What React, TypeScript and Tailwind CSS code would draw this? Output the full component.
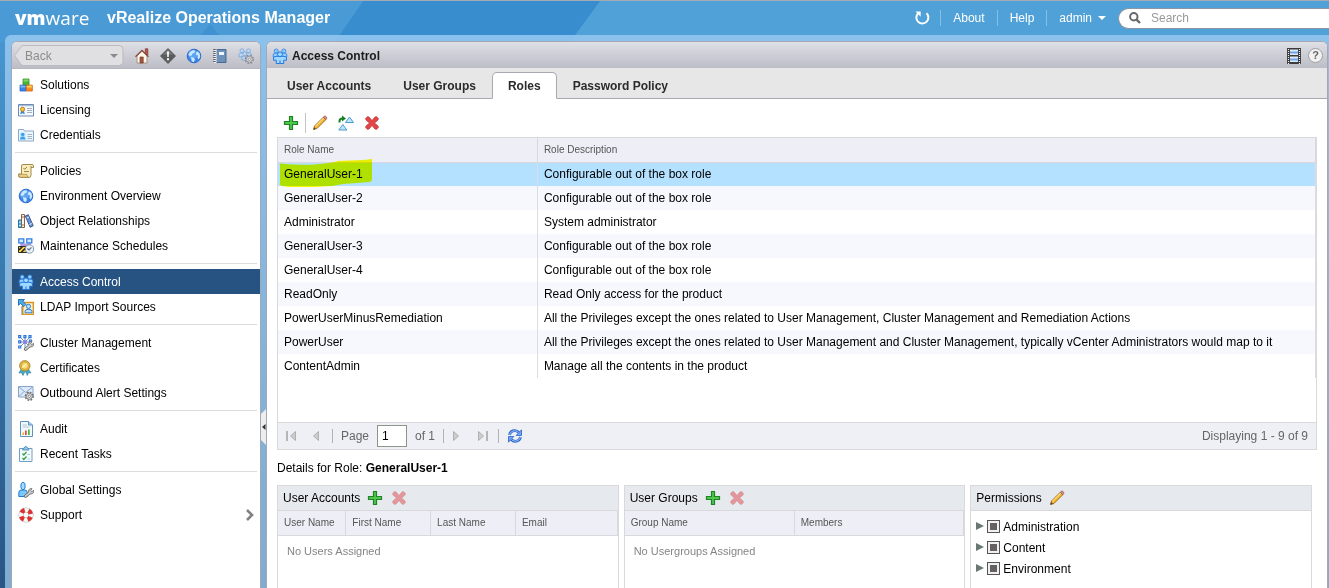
import React from "react";

type IconName = keyof typeof icons;

const person = (x: number, y: number, fill: string, stroke: string) => (
  <g fill={fill} stroke={stroke} strokeWidth=".8">
    <circle cx={x} cy={y} r="2" />
    <path d={`M${x - 3} ${y + 6}V${y + 4}q0-1.800 1.800-1.800h2.400q1.800 0 1.800 1.800v2z`} />
  </g>
);

const people = (
  <>
    {person(4.2, 3, "#8fd0ff", "#2f7fe0")}
    {person(11.8, 3, "#8fd0ff", "#2f7fe0")}
    <g fill="#9fd9ff" stroke="#1d6fe0" strokeWidth=".9">
      <path d="M1.500 9.500 4 8.300h8l2.500 1.200v2.700h-2.800v3.300H4.300v-3.300H1.500z" />
      <circle cx="8" cy="6.300" r="2.400" />
    </g>
    <path d="M8 12.500v2.500" stroke="#1d6fe0" />
  </>
);

const gear = (
  <g>
    <circle cx="11.300" cy="11.300" r="3.900" stroke="#6e6e6e" strokeDasharray="1.700 1.360" strokeWidth="1.500" />
    <circle cx="11.300" cy="11.300" r="3" fill="#e3e3e3" stroke="#7b7b7b" strokeWidth=".9" />
    <circle cx="11.300" cy="11.300" r="1.200" fill="#fff" stroke="#666" strokeWidth=".7" />
  </g>
);

const wrench = (
  <>
    <path d="M7.500 14.300 11.800 10.600" stroke="#6b6b6b" strokeWidth="3.200" strokeLinecap="round" />
    <path d="M11 7.500q1.700-1.500 3-.9l-1.300 1.900 1.100 1 1.900-1.100q.5 2.600-1.500 3.400-2.300.7-3.300-1-.9-1.600.1-3.300z" fill="#c4c4c4" stroke="#6b6b6b" strokeWidth=".8" />
    <path d="M7.600 14.200 12 10.400" stroke="#cfcfcf" strokeWidth="1.700" strokeLinecap="round" />
  </>
);

const icons = {
  home: (
    <>
      <path d="M11.300.8h2.500v6h-2.500z" fill="#b5544a" stroke="#84332a" strokeWidth=".7" />
      <path d="M3 7.800 8 3.200l5 4.600v7.200H3z" fill="#fdf6ea" stroke="#a08a78" strokeWidth=".9" />
      <path d="M1.500 8.800 8 2.400l6.500 6.400" stroke="#8b4a3f" strokeWidth="1.300" />
      <path d="M6 9h3.200v6H6z" fill="#a5583e" stroke="#7a3a28" strokeWidth=".7" />
    </>
  ),
  alert: (
    <>
      <path d="m8 .5 7.500 7.500L8 15.500.5 8z" fill="#5c5c5c" stroke="#474747" strokeWidth=".7" />
      <path d="m8 1.500 5 5H3z" fill="#7b7b7b" />
      <path d="M7 3.500h2l-.3 5.500H7.300zM7 10.200h2v2H7z" fill="#fff" />
    </>
  ),
  globe: (
    <>
      <circle cx="8" cy="8" r="6.800" fill="#3d84ea" stroke="#2c6bce" />
      <circle cx="6.800" cy="6.500" r="4.600" fill="#5fa3f5" />
      <path d="M2.300 6.800 4.500 3.500l3-1.500 1.600.8-.6 2-2 .7-.8 1.900L3.800 8zM5 9l3 .8 1 2-1.400 2.500-2-1.200zM11 3.200l2.400 1.900.9 3.400-1.500 3-1.500-1.800.7-1.900-2.200-1.300.5-2.100z" fill="#c9e9ff" />
    </>
  ),
  notebook: (
    <>
      <path d="M3 1.500h11v13H3z" fill="#6d91ba" stroke="#476a93" />
      <path d="M2 1h2.500v14H2z" fill="#f4f4f4" />
      <path d="M2.500 1v14" stroke="#555" strokeWidth="2.400" strokeDasharray="1 1" />
      <path d="M7 4h5v3H7z" fill="#f2f7fc" />
    </>
  ),
  peopleGear: (
    <g opacity=".7">
      {person(4, 2.800, "#b5dbfa", "#5a93dc")}
      {person(10.500, 2.800, "#b5dbfa", "#5a93dc")}
      {person(6.800, 6, "#b5dbfa", "#5a93dc")}
      {gear}
    </g>
  ),
  people,
  blocks: (
    <>
      <path d="M5 2h6v6.500H5z" fill="#4bb434" stroke="#368a26" strokeWidth=".8" />
      <path d="M5.500 2.500h5v2h-5z" fill="#83d563" />
      <path d="M2 8.200h6V14H2z" fill="#3c83e8" stroke="#2a63b9" strokeWidth=".8" />
      <path d="M2.500 8.700h5v1.800h-5z" fill="#84b7fa" />
      <path d="M8.300 8.200h6V14h-6z" fill="#fa8e1d" stroke="#cf5c18" strokeWidth=".8" />
      <path d="M8.800 8.700h5v1.800h-5z" fill="#ffd44e" />
    </>
  ),
  license: (
    <>
      <path d="M.5 2.500h15v11.500H.5z" fill="#f6f9fd" stroke="#6e8bb3" />
      <path d="M1 3h14v1.300H1z" fill="#a9bfdb" />
      <path d="m3 9-.8 3.300 2.300-1 2.300 1L6 9z" fill="#3d85cc" />
      <circle cx="4.600" cy="7.300" r="2.100" fill="#f7c23e" stroke="#b5801c" strokeWidth=".9" />
      <path d="M9 6.500h5M9 8.500h5M9 10.500h5" stroke="#a7aebd" />
    </>
  ),
  credential: (
    <>
      <path d="M.5 2.500h5l1 1.500h9V14H.5z" fill="#edf5fd" stroke="#8aa7c9" />
      <path d="M2 5.500h5.500v7H2z" fill="#c1e5ff" />
      <circle cx="4.700" cy="7.500" r="1.700" fill="#38a1ee" />
      <path d="M2 12.500q.2-3 2.700-3t2.800 3z" fill="#38a1ee" />
      <path d="M9.500 7.500H14M9.500 9.500H14M9.500 11.500H14" stroke="#9fb4ce" />
    </>
  ),
  policy: (
    <>
      <path d="M5 1.500h9q1.500 0 1.500 1.500v1.500h-2.500V12q0 2.500-2 2.500H2.500q-2 0-2-2V11h3V3q0-1.500 1.500-1.500z" fill="#f9ebba" stroke="#a38b4c" />
      <path d="M.8 11.300h8q0 2.700 2 3H2.500q-1.700-.2-1.700-2z" fill="#ebcf82" stroke="#a38b4c" strokeWidth=".7" />
      <path d="m5.500 5 1.200 1.300L9 4M6 8.500h5M13 4.500V3" stroke="#96824b" />
    </>
  ),
  books: (
    <>
      <path d="M.5 7h3v7.500h-3z" fill="#4db1e2" stroke="#23759f" />
      <path d="M1 9h2M1 12.500h2" stroke="#d3f0ff" />
      <path d="M3.500 1.500h3v13h-3z" fill="#f8f2ea" stroke="#85604a" />
      <path d="M4 4h2M4 12h2" stroke="#b36b49" />
      <path d="m7.300 3 3-1.300 4.900 11-3 1.600z" fill="#6893d7" stroke="#36568f" />
      <path d="m8.800 5 2-.9M11.500 11.500l2.200-1" stroke="#eff5ff" />
    </>
  ),
  maintenance: (
    <>
      <path d="M3.500 5v3M11.500 5v3M3 6.800h9" stroke="#b39ae5" strokeWidth="2.500" />
      <path d="M.8.800h5v4h-5zM8.800.800h5v4h-5z" fill="#d6ecff" stroke="#2f80e4" strokeWidth="1.300" />
      <path d="M.5 8.500h8.500v6H.5z" fill="#ffd93b" stroke="#2b2b2b" />
      <path d="m1 12 3.300-3.300M3.500 14 9 8.800" stroke="#2b2b2b" strokeWidth="1.700" />
      <circle cx="11.500" cy="11" r="4.100" fill="#edf4fb" stroke="#8297b1" />
      <path d="m9.300 10.500 1.800 1.500 2.300-2.600" stroke="#5d7390" strokeWidth="1.200" />
    </>
  ),
  ldap: (
    <>
      <path d="M4.800 3.500h10.500v12H4.800z" fill="#fff1c9" stroke="#dc9524" strokeWidth="1.400" />
      <circle cx="10.500" cy="7.400" r="2.100" fill="#bfe3ff" stroke="#2f80d0" />
      <path d="M7 13.800v-1.500q0-2 3.500-2t3.500 2v1.500z" fill="#bfe3ff" stroke="#2f80d0" />
      <path d="M3.800 7.500V16" stroke="#555" strokeWidth="1.200" strokeDasharray="1 1" />
      <path d="M.5.500h6L4.800 2.200 8 5.400 5.800 7.600 2.500 4.400.5 6.300z" fill="#4aacec" stroke="#1c68a8" strokeWidth=".9" />
    </>
  ),
  cluster: (
    <>
      <path d="m2.500 2.500 9 9M11.500 2.500l-9 9M7 1v12M1 7h12" stroke="#6484b5" strokeWidth=".9" />
      <path d="M.7.700h2v2h-2zM5.900.700h2v2h-2zM11 .7h2v2h-2zM.7 5.900h2v2h-2zM.7 11h2v2h-2zM11.500 5h2v2h-2z" fill="#fff" stroke="#2c74db" strokeWidth="1.200" />
      <circle cx="7" cy="7" r="1.900" fill="#8b7ae8" />
      {wrench}
    </>
  ),
  certificate: (
    <>
      <path d="M3.500 8.500 1 13l2.500-.2L5 15.500l2.500-5zM10 8.500l3 4.500-2.500-.2L9.300 15.500 6.800 10z" fill="#42a9cf" stroke="#2d7c9d" strokeWidth=".6" />
      <circle cx="6.800" cy="5.800" r="5.200" fill="#e9bd41" stroke="#a68529" strokeWidth=".9" />
      <circle cx="6.800" cy="5.800" r="3.500" fill="#f7dc79" stroke="#cda134" strokeWidth=".8" />
      <path d="m4.500 7.800 4.300-4" stroke="#fff1b5" strokeWidth="1.300" />
    </>
  ),
  mailGear: (
    <>
      <path d="M.5 1.500h14.500v10.500H.5z" fill="#dbe9f9" stroke="#89a3c7" />
      <path d="m1 2 6.700 5.500L14.500 2M1 11.500l5-5M14.500 11.500l-5-5" stroke="#89a3c7" />
      {gear}
    </>
  ),
  audit: (
    <>
      <path d="M2.500.5h8L14.500 4v11.500h-12z" fill="#f1f9ff" stroke="#6092bf" />
      <path d="M10.500.5V4h4" fill="#a7cdec" stroke="#6092bf" />
      <path d="M4.500 4H9M4.500 6h7" stroke="#b7c7d4" />
      <path d="M4.500 11.500h1.500V14H4.500z" fill="#f0a92b" />
      <path d="M7 9.500h1.700V14H7z" fill="#e44a3b" />
      <path d="M10 8.500h1.700V14H10z" fill="#46b53f" />
    </>
  ),
  tasks: (
    <>
      <path d="M1.500 2.500H14v13H1.500z" fill="#f4fbff" stroke="#6f9fc2" />
      <path d="M4.500 4q0-2 1.800-2Q6.500.500 7.800.500T9.300 2Q11 2 11 4z" fill="#92c7ec" stroke="#4d8dbc" strokeWidth=".9" />
      <path d="m4.500 7.500 1.300 1.500L8.500 6M4.500 12l1.300 1.500 2.700-3" stroke="#2fa03f" strokeWidth="1.300" />
      <path d="M9.500 8.500h2.500M9.500 13h2.500" stroke="#b1cad9" />
    </>
  ),
  userWrench: (
    <>
      <path d="M.8 14.500V10.800q0-2.800 2.500-2.800h3.500q2.500 0 2.500 2.800v3.700z" fill="#7cc8fb" stroke="#237cc9" />
      <path d="M3 2 4 .6h2L7 2v4L6 7.500H4L3 6z" fill="#a8dcff" stroke="#237cc9" />
      {wrench}
    </>
  ),
  lifebuoy: (
    <>
      <circle cx="8" cy="8" r="5" stroke="#b4b4b4" strokeWidth="5.200" />
      <circle cx="8" cy="8" r="5" stroke="#f7f7f7" strokeWidth="4.200" />
      <circle cx="8" cy="8" r="5" stroke="#dc3330" strokeWidth="4.400" strokeDasharray="3.927 3.927" strokeDashoffset="-1.963" />
    </>
  ),
  plus: <path d="M6.500 1.500h3v5h5v3h-5v5h-3v-5h-5v-3h5z" fill="#4ac94a" stroke="#238127" strokeWidth="1.200" />,
  pencil: (
    <>
      <path d="m1.500 14.500 1-3.500L11.300 2.200l2.500 2.500L5 13.500z" fill="#f6b32d" stroke="#85591e" strokeWidth=".8" />
      <path d="M3.500 11.300 11.700 3.100" stroke="#ffe184" strokeWidth="1.100" />
      <path d="m11.300 2.200 1-1q.9-.5 1.800.4t.6 2l-.9 1.100z" fill="#e58b87" stroke="#875151" strokeWidth=".7" />
      <path d="m1.500 14.500.6-2.200 1.700 1.700z" fill="#493a2e" />
    </>
  ),
  clone: (
    <>
      <path d="m11.500 2 4 5.500h-8zM4.800 9.500l4 5.500h-8z" fill="#bfe4fb" stroke="#3a93cf" strokeWidth=".9" />
      <path d="M1.500 7.500V6q0-2.500 3-2.500" stroke="#198124" strokeWidth="2" />
      <path d="m4 .6 4 3-4 3z" fill="#198124" />
    </>
  ),
  cross: (
    <path d="M1.600 3.500 3.500 1.600 5 2l3 3.500L11 2l1.500-.4 1.900 1.900L14 5l-3.500 3L14 11l.4 1.500-1.900 1.900L11 14l-3-3.500L5 14l-1.500.4-1.900-1.900L2 11l3.500-3L2 5z" fill="#e44648" stroke="#b93537" strokeWidth=".7" />
  ),
  film: (
    <>
      <path d="M1 0h14v16H1z" fill="#3b3b3b" />
      <path d="M2.500 1v15M13.500 1v15" stroke="#f1f1f1" strokeWidth="1.200" strokeDasharray="1 1" />
      <path d="M4 1.500h8V7H4zM4 8.500h8V14H4z" fill="#dcebfc" />
      <path d="M4 3.500h8v2H4zM4 10.500h8v2H4z" fill="#75a3e8" />
    </>
  ),
  first: (
    <>
      <path d="M3 3v10" stroke="#b5b5b5" strokeWidth="2" />
      <path d="M11.500 3.500v9L6.500 8z" fill="#ccc" stroke="#b0b0b0" />
    </>
  ),
  prev: <path d="M10.500 3.500v9L5.500 8z" fill="#ccc" stroke="#b0b0b0" />,
  next: <path d="M5.500 3.500v9l5-4.500z" fill="#ccc" stroke="#b0b0b0" />,
  last: (
    <>
      <path d="M13 3v10" stroke="#b5b5b5" strokeWidth="2" />
      <path d="M4.500 3.500v9l5-4.500z" fill="#ccc" stroke="#b0b0b0" />
    </>
  ),
  refresh: (
    <>
      <path d="M2.500 7q1-4.300 5.300-4.300 2.400 0 4 2" stroke="#2a63c8" strokeWidth="2.800" />
      <path d="M14.500 1.800v5.700H9.200z" fill="#6ea6f3" stroke="#2a63c8" strokeWidth=".8" />
      <path d="M13.500 9q-1 4.300-5.300 4.300-2.400 0-4-2" stroke="#2a63c8" strokeWidth="2.800" />
      <path d="M1.500 14.200V8.500h5.300z" fill="#6ea6f3" stroke="#2a63c8" strokeWidth=".8" />
      <path d="M2.600 7q1-4.200 5.200-4.200 2.300 0 3.700 1.700M13.400 9q-1 4.200-5.200 4.200-2.300 0-3.700-1.700" stroke="#a3cbff" />
    </>
  ),
};

function Icon({ name, className = "" }: { name: IconName; className?: string }) {
  return (
    <svg viewBox="0 0 16 16" fill="none" aria-hidden="true" className={`size-4 shrink-0 ${className}`}>
      {icons[name]}
    </svg>
  );
}

function IconButton({ name, label, disabled }: { name: IconName; label: string; disabled?: boolean }) {
  return (
    <button type="button" aria-label={label} disabled={disabled} className="shrink-0">
      <Icon name={name} className={disabled ? "opacity-50" : ""} />
    </button>
  );
}

const navGroups: { label: string; icon: IconName }[][] = [
  [
    { label: "Solutions", icon: "blocks" },
    { label: "Licensing", icon: "license" },
    { label: "Credentials", icon: "credential" },
  ],
  [
    { label: "Policies", icon: "policy" },
    { label: "Environment Overview", icon: "globe" },
    { label: "Object Relationships", icon: "books" },
    { label: "Maintenance Schedules", icon: "maintenance" },
  ],
  [
    { label: "Access Control", icon: "people" },
    { label: "LDAP Import Sources", icon: "ldap" },
  ],
  [
    { label: "Cluster Management", icon: "cluster" },
    { label: "Certificates", icon: "certificate" },
    { label: "Outbound Alert Settings", icon: "mailGear" },
  ],
  [
    { label: "Audit", icon: "audit" },
    { label: "Recent Tasks", icon: "tasks" },
  ],
  [
    { label: "Global Settings", icon: "userWrench" },
    { label: "Support", icon: "lifebuoy" },
  ],
];

const roles = [
  { name: "GeneralUser-1", description: "Configurable out of the box role" },
  { name: "GeneralUser-2", description: "Configurable out of the box role" },
  { name: "Administrator", description: "System administrator" },
  { name: "GeneralUser-3", description: "Configurable out of the box role" },
  { name: "GeneralUser-4", description: "Configurable out of the box role" },
  { name: "ReadOnly", description: "Read Only access for the product" },
  {
    name: "PowerUserMinusRemediation",
    description:
      "All the Privileges except the ones related to User Management, Cluster Management and Remediation Actions",
  },
  {
    name: "PowerUser",
    description:
      "All the Privileges except the ones related to User Management and Cluster Management, typically vCenter Administrators would map to it",
  },
  { name: "ContentAdmin", description: "Manage all the contents in the product" },
];

const tabs = ["User Accounts", "User Groups", "Roles", "Password Policy"];

function Header() {
  return (
    <header className="flex h-[35px] shrink-0 items-center border-t border-[#a5abb2] pl-[15px] text-white">
      <a href="#" className="flex w-[92px] items-center font-['Open_Sans',sans-serif] text-[19px] leading-8">
        <span className="font-extrabold">vm</span>
        <span>ware</span>
      </a>
      <h1 className="text-base font-bold">vRealize Operations Manager</h1>
      <nav className="ml-auto flex items-center text-xs">
        <button type="button" aria-label="Refresh" className="mr-2.5">
          <svg viewBox="0 0 16 16" fill="none" className="size-4">
            <path d="M12.500 3.200A6 6 0 1 1 4 3.400" stroke="#fff" strokeWidth="2" />
            <path d="M1.500 1.500h5.200v5.200z" fill="#fff" />
          </svg>
        </button>
        <a href="#" className="border-l border-[#86bfe6] px-3">About</a>
        <a href="#" className="border-l border-[#86bfe6] px-3">Help</a>
        <button type="button" className="flex items-center gap-1.5 border-l border-[#86bfe6] px-3">
          admin
          <svg viewBox="0 0 8 4" className="h-1 w-2"><path d="M0 0h8L4 4z" fill="#fff" /></svg>
        </button>
      </nav>
      <label className="flex h-[21px] w-[211px] items-center gap-2.5 rounded-l-full border border-r-0 border-[#8a96a3] bg-white pl-2.5">
        <svg viewBox="0 0 12 12" fill="none" className="size-3 shrink-0" aria-hidden="true">
          <circle cx="4.800" cy="4.800" r="3.700" stroke="#686868" strokeWidth="2" />
          <path d="m7.600 7.600 3.400 3.400" stroke="#686868" strokeWidth="2.400" />
        </svg>
        <input type="text" aria-label="Search" placeholder="Search" className="w-full min-w-0 text-xs text-black outline-none placeholder:text-[#9a9a9a]" />
      </label>
    </header>
  );
}

function Sidebar() {
  return (
    <aside className="flex w-[250px] shrink-0 flex-col overflow-hidden rounded-t-md border border-b-0 border-[#a3a8b4] bg-white">
      <div className="flex h-[27px] shrink-0 items-center gap-2.5 border-b border-[#b5b6be] bg-linear-to-b from-[#dfdfe6] to-[#bcbdc6] pt-px pl-0.5">
        <button type="button" className="relative flex h-[21px] w-[110px] items-center justify-between pr-1.5 pl-[11px] text-xs text-[#8b8b8b]">
          <svg viewBox="0 0 110 21" fill="none" className="absolute inset-0 size-full" aria-hidden="true">
            <path d="M9 .5h96q4 0 4 4v12q0 4-4 4H9q-1.500 0-2.500-2L.7 10.500 6.500 2.500q1-2 2.500-2z" fill="#e0e0e2" stroke="#bababf" />
          </svg>
          <span className="relative">Back</span>
          <svg viewBox="0 0 8 4" className="relative h-1 w-2"><path d="M0 0h8L4 4z" fill="#8b8b8b" /></svg>
        </button>
        <IconButton name="home" label="Home" />
        <IconButton name="alert" label="Alerts" />
        <IconButton name="globe" label="Environment" />
        <IconButton name="notebook" label="Content" />
        <IconButton name="peopleGear" label="Administration" />
      </div>
      <nav className="pt-[3px] text-xs">
        {navGroups.map((group, index) => (
          <React.Fragment key={index}>
            {index > 0 && <hr className="mx-[3px] my-[5px] border-[#dcdcde]" />}
            <ul>
              {group.map((item) => (
                <li key={item.label}>
                  <a
                    href="#"
                    className={`flex h-[25px] items-center gap-1.5 px-1.5 ${
                      item.label === "Access Control" ? "bg-[#275382] text-white" : "text-black"
                    }`}
                  >
                    <Icon name={item.icon} />
                    {item.label}
                    {item.label === "Support" && (
                      <svg viewBox="0 0 8 12" fill="none" className="ml-auto h-3 w-2">
                        <path d="m1 1 5 5-5 5" stroke="#828282" strokeWidth="2.600" />
                      </svg>
                    )}
                  </a>
                </li>
              ))}
            </ul>
          </React.Fragment>
        ))}
      </nav>
    </aside>
  );
}

function RolesTable() {
  return (
    <div className="mt-1 border border-[#d9d9dc]">
      <div className="min-h-[284px]">
        <table className="w-full table-fixed text-left text-xs">
          <thead className="bg-[#eeeef7] text-[10px] text-[#555]">
            <tr className="h-6 border-b border-[#d9d9dc]">
              <th className="w-1/4 border-r border-[#d9d9dc] px-1.5 font-normal">Role Name</th>
              <th className="border-r border-[#d9d9dc] px-1.5 font-normal">Role Description</th>
            </tr>
          </thead>
          <tbody>
            {roles.map((role, index) => (
              <tr key={role.name} className={`h-6 ${index === 0 ? "bg-[#b4e1ff]" : "odd:bg-white even:bg-[#f7f7fe]"}`}>
                <td className="relative border-r border-[#dcdce2] px-1.5">
                  {role.name}
                  {index === 0 && (
                    <svg viewBox="0 0 92 28" className="absolute -top-1 left-0.5 h-7 w-[92px] mix-blend-multiply" aria-hidden="true">
                      <path d="M0 4.500q30 3.500 57-2V2l26-1 9-1v21l-2 2-27 2-11 2-18 1H9l-7-1-2-1z" fill="#f8ff00" />
                    </svg>
                  )}
                </td>
                <td className="truncate border-r border-[#dcdce2] px-1.5">{role.description}</td>
              </tr>
            ))}
          </tbody>
        </table>
      </div>
      <div className="flex h-[27px] items-center gap-2 border-t border-[#d9d9dc] bg-[#eef0f6] pr-2 pl-1.5 text-xs text-[#666]">
        <div className="flex items-center gap-2">
          <IconButton name="first" label="First page" />
          <IconButton name="prev" label="Previous page" />
        </div>
        <span className="h-3.5 border-l border-[#b2b2b2]" />
        <label className="flex items-center gap-2">
          Page
          <input type="text" defaultValue="1" className="h-[22px] w-[30px] border border-[#8f978c] bg-white px-1 text-black" />
        </label>
        <span>of 1</span>
        <span className="h-3.5 border-l border-[#b2b2b2]" />
        <div className="-ml-1 flex items-center gap-2.5">
          <IconButton name="next" label="Next page" />
          <IconButton name="last" label="Last page" />
        </div>
        <span className="h-3.5 border-l border-[#b2b2b2]" />
        <IconButton name="refresh" label="Refresh roles" />
        <span className="ml-auto">Displaying 1 - 9 of 9</span>
      </div>
    </div>
  );
}

function DetailPanel({ title, actions, children }: { title: string; actions: React.ReactNode; children: React.ReactNode }) {
  return (
    <section className="flex flex-1 flex-col border border-b-0 border-[#d9d9dc]">
      <div className="flex h-[25px] shrink-0 items-center gap-[7px] border-b border-[#d9d9dc] bg-[#e6e9ee] pl-[5px]">
        <h3>{title}</h3>
        {actions}
      </div>
      {children}
    </section>
  );
}

function AddRemove({ subject }: { subject: string }) {
  return (
    <div className="flex gap-2">
      <IconButton name="plus" label={`Add ${subject}`} />
      <IconButton name="cross" label={`Remove ${subject}`} disabled />
    </div>
  );
}

function RoleDetails() {
  return (
    <div className="flex flex-1 gap-[5px] pr-[5px] text-xs">
      <DetailPanel title="User Accounts" actions={<AddRemove subject="user" />}>
        <table className="w-full table-fixed text-left">
          <thead className="bg-[#eeeef7] text-[10px] text-[#555]">
            <tr className="h-6 border-b border-[#d9d9dc]">
              <th className="w-1/5 border-r border-[#d9d9dc] px-1.5 font-normal whitespace-nowrap">User Name</th>
              <th className="w-1/4 border-r border-[#d9d9dc] px-1.5 font-normal">First Name</th>
              <th className="w-1/4 border-r border-[#d9d9dc] px-1.5 font-normal">Last Name</th>
              <th className="border-r border-[#d9d9dc] px-1.5 font-normal">Email</th>
            </tr>
          </thead>
          <tbody>
            <tr>
              <td colSpan={4} className="px-[9px] py-2 text-[11px] text-[#858585]">No Users Assigned</td>
            </tr>
          </tbody>
        </table>
      </DetailPanel>
      <DetailPanel title="User Groups" actions={<AddRemove subject="group" />}>
        <table className="w-full table-fixed text-left">
          <thead className="bg-[#eeeef7] text-[10px] text-[#555]">
            <tr className="h-6 border-b border-[#d9d9dc]">
              <th className="w-1/2 border-r border-[#d9d9dc] px-1.5 font-normal">Group Name</th>
              <th className="border-r border-[#d9d9dc] px-1.5 font-normal">Members</th>
            </tr>
          </thead>
          <tbody>
            <tr>
              <td colSpan={2} className="px-[9px] py-2 text-[11px] text-[#858585]">No Usergroups Assigned</td>
            </tr>
          </tbody>
        </table>
      </DetailPanel>
      <DetailPanel title="Permissions" actions={<IconButton name="pencil" label="Edit permissions" />}>
        <ul className="pt-[5px] pl-[5px]">
          {["Administration", "Content", "Environment"].map((permission) => (
            <li key={permission} className="flex h-[21px] items-center gap-[3px]">
              <button type="button" aria-label={`Expand ${permission}`}>
                <svg viewBox="0 0 8 8" className="mb-0.5 size-2"><path d="M0 0v8l8-4z" fill="#697875" /></svg>
              </button>
              <label className="flex items-center gap-[3px]">
                <input
                  type="checkbox"
                  className="size-[13px] appearance-none border border-[#555] bg-[#666062] shadow-[inset_0_0_0_2px_#f0f0f0]"
                />
                {permission}
              </label>
            </li>
          ))}
        </ul>
      </DetailPanel>
    </div>
  );
}

function AccessControl() {
  return (
    <main className="flex min-w-0 flex-1 flex-col overflow-hidden rounded-t-md border border-b-0 border-[#a3a8b4] bg-white">
      <div className="flex h-[26px] shrink-0 items-center bg-linear-to-b from-[#dfdfe6] to-[#bcbdc6] pt-px pr-1 pl-[5px]">
        <Icon name="people" />
        <h2 className="ml-1 text-xs font-bold text-[#1c1c1c]">Access Control</h2>
        <div className="ml-auto flex items-center gap-1.5">
          <IconButton name="film" label="Video" />
          <button type="button" aria-label="Help" className="flex size-[15px] items-center justify-center rounded-full border border-[#9d9da2] bg-[#f2f2f2] text-[11px] font-bold text-[#666]">
            ?
          </button>
        </div>
      </div>
      <div className="flex h-[31px] shrink-0 items-end border-b border-[#a9a8b2] bg-[#e7e7e7] pl-1 text-xs font-bold text-[#2b2b2b]">
        {tabs.map((tab) => (
          <button
            key={tab}
            type="button"
            className={`h-[27px] border px-[15px] ${
              tab === "Roles" ? "-mb-px rounded-t-[5px] border-[#a9a8b2] border-b-white bg-white" : "border-transparent pt-0.5"
            }`}
          >
            {tab}
          </button>
        ))}
      </div>
      <div className="flex flex-1 flex-col px-2.5 pt-3.5">
        <div className="flex h-5 items-center gap-1.5 pl-1.5">
          <div className="flex h-full items-center border-r border-[#c4c4c4] pr-1.5">
            <IconButton name="plus" label="Add role" />
          </div>
          <div className="flex items-center gap-2.5">
            <IconButton name="pencil" label="Edit role" />
            <IconButton name="clone" label="Clone role" />
            <IconButton name="cross" label="Delete role" />
          </div>
        </div>
        <RolesTable />
        <p className="mt-2.5 mb-[9px] text-xs">
          Details for Role: <strong>GeneralUser-1</strong>
        </p>
        <RoleDetails />
      </div>
    </main>
  );
}

export default function App() {
  return (
    <div className="relative isolate flex min-h-screen flex-col overflow-hidden bg-linear-to-b from-[#4a9bd6] to-[#285685] font-['Liberation_Sans',Arial,sans-serif] text-black">
      <svg viewBox="0 0 1329 42" preserveAspectRatio="xMinYMin slice" className="absolute inset-x-0 top-0 -z-10 h-[42px] w-full" aria-hidden="true">
        <path d="M0 0h364l-29 42H0z" fill="#4a9ad5" />
        <path d="M364 0h237l-31 42H335z" fill="#388dcf" />
        <path d="M601 0h728v42H570z" fill="#50a1d7" />
        <path d="m210 24 15 18h-30z" fill="#388dcf" opacity=".6" />
      </svg>
      <Header />
      <div className="ml-[5px] flex flex-1 rounded-tl-md bg-linear-to-b from-[#92c6f0]/90 to-[#80acd0] pt-1.5 pr-px pl-1.5">
        <Sidebar />
        <div className="flex w-[5px] shrink-0 flex-col">
          <button type="button" aria-label="Collapse sidebar" className="mt-[368px]">
            <svg viewBox="0 0 5 36" className="h-9 w-[5px]">
              <path d="M5 0v36L0 31V5z" fill="#ededed" />
              <path d="M4.500 15v6L1 18z" fill="#333" />
            </svg>
          </button>
        </div>
        <AccessControl />
      </div>
    </div>
  );
}
